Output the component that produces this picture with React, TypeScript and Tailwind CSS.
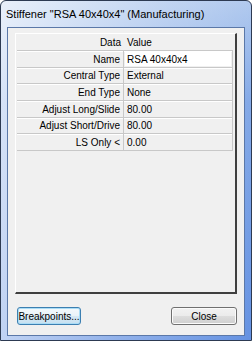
const rows: { label: string; value: string; editing?: boolean; h: string }[] = [
  { label: "Name", value: "RSA 40x40x4", editing: true, h: "h-[17px]" },
  { label: "Central Type", value: "External", h: "h-[16px]" },
  { label: "End Type", value: "None", h: "h-[17px]" },
  { label: "Adjust Long/Slide", value: "80.00", h: "h-[17px]" },
  { label: "Adjust Short/Drive", value: "80.00", h: "h-[16px]" },
  { label: "LS Only <", value: "0.00", h: "h-[17px]" },
];

export default function App() {
  return (
    <div
      className="flex h-[341px] w-[252px] flex-col overflow-hidden rounded-t-[6px] border border-[#2d3a52] bg-[linear-gradient(100deg,rgba(255,255,255,0.75)_0%,rgba(255,255,255,0.3)_55%,rgba(255,255,255,0)_100%),linear-gradient(180deg,#a6c2ec_0%,#77a0e4_30%,#6592e2_100%)] text-black"
      style={{ fontFamily: '"Liberation Sans", Arial, sans-serif' }}
    >
      {/* Title bar */}
      <div className="flex h-[26px] shrink-0 items-center pl-[5px] pt-[1px] text-[11px]">
        Stiffener "RSA 40x40x4" (Manufacturing)
      </div>

      {/* Client area */}
      <div className="mx-[6px] mb-[4px] flex flex-1 flex-col border border-[#5b78a8] bg-[#f0f0f0]">
        {/* Property panel */}
        <div className="mx-[7px] mt-[5px] flex flex-1 flex-col border-l border-t border-b-2 border-r-2 border-l-white border-t-white border-b-[#3f3f3f] border-r-[#3f3f3f] pl-[1px] text-[10px]">
          <div className="flex h-[16px] w-[216px] items-center">
            <div className="w-[107px] pr-[3px] text-right">Data</div>
            <div className="pl-[3px]">Value</div>
          </div>
          <div className="w-[216px] border-t border-[#c8c8c8]">
            {rows.map((row) => (
              <div key={row.label} className={`flex ${row.h}`}>
                <div className="flex w-[107px] items-center justify-end border-b border-r border-[#c8c8c8] pr-[3px] shadow-[inset_0_1px_0_#ffffff]">
                  {row.label}
                </div>
                <div className="flex flex-1 border-b border-r border-[#c8c8c8] shadow-[inset_0_1px_0_#ffffff]">
                  {row.editing ? (
                    <div className="my-[1px] ml-[1px] mr-[1px] flex flex-1 items-center bg-white pl-[2px]">
                      {row.value}
                    </div>
                  ) : (
                    <div className="flex flex-1 items-center pl-[3px]">{row.value}</div>
                  )}
                </div>
              </div>
            ))}
          </div>
        </div>

        {/* Buttons */}
        <div className="mb-[10px] mt-[13px] flex items-center justify-between pl-[9px] pr-[7px] text-[10px]">
          <button
            type="button"
            className="flex h-[18px] w-[64px] items-center justify-center rounded-[3px] border border-[#3c7fb1] bg-[linear-gradient(180deg,#f4f9fc_0%,#e9f3f9_50%,#d6e9f5_51%,#c6e0f0_100%)] shadow-[inset_0_0_0_1px_#a9dcf6]"
          >
            Breakpoints...
          </button>
          <button
            type="button"
            className="flex h-[18px] w-[66px] items-center justify-center rounded-[3px] border border-[#707070] bg-[linear-gradient(180deg,#f2f2f2_0%,#ebebeb_50%,#dddddd_51%,#cfcfcf_100%)] shadow-[inset_0_0_0_1px_#fbfbfb]"
          >
            Close
          </button>
        </div>
      </div>
    </div>
  );
}
